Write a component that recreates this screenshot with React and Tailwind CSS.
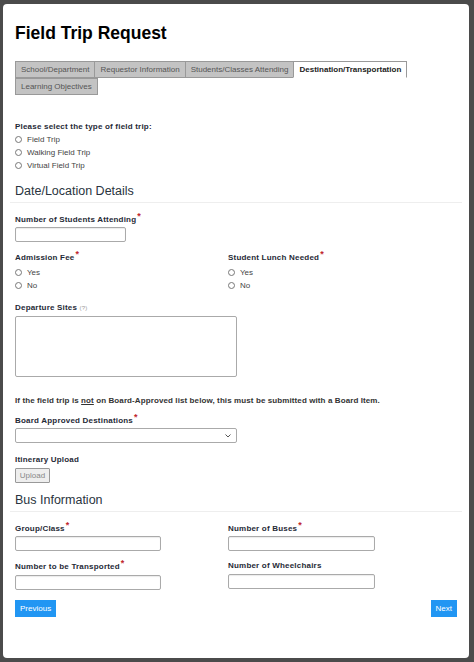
import React from "react";

const F = { fontFamily: '"Liberation Sans", Arial, sans-serif' };

function Req() {
  return <span className="text-[#c0262d] text-[9px] relative -top-[3px] ml-[1px]">*</span>;
}

function Label({ children, req, className = "" }) {
  return (
    <div className={"font-bold text-[8px] text-[#1f2a36] tracking-[0.2px] leading-[10px] " + className}>
      {children}
      {req && <Req />}
    </div>
  );
}

function Radio({ label }) {
  return (
    <div className="flex items-center gap-[5px] h-[13px]">
      <span className="w-[7px] h-[7px] rounded-full border border-[#777] bg-white" />
      <span className="text-[8px] text-[#444]">{label}</span>
    </div>
  );
}

function Input({ w }) {
  return <div className={"h-[15px] border border-[#aaa] rounded-[2px] bg-white shadow-[inset_0_1px_1px_rgba(0,0,0,0.08)] " + w} />;
}

function Tab({ children, active }) {
  return (
    <div
      className={
        "h-[17px] px-[5px] flex items-center text-[8px] border border-[#999] -mr-[1px] " +
        (active ? "bg-white text-[#222] font-bold border-b-white" : "bg-[#c3c3c3] text-[#555]")
      }
    >
      {children}
    </div>
  );
}

export default function App() {
  return (
    <div style={F} className="w-[474px] h-[662px] bg-[#4b4b4b] pt-[4px] pl-[3px] pr-[5px] pb-[4px]">
      <div className="bg-white rounded-[4px] h-full px-[12px] pt-[19px] relative">
        <h1 className="text-[17.5px] font-bold text-black leading-[20px]">Field Trip Request</h1>
        <div className="mt-[18px] w-[400px] flex flex-wrap">
          <Tab>School/Department</Tab>
          <Tab>Requestor Information</Tab>
          <Tab>Students/Classes Attending</Tab>
          <Tab active>Destination/Transportation</Tab>
          <Tab>Learning Objectives</Tab>
        </div>

        <Label className="mt-[27px]">Please select the type of field trip:</Label>
        <div className="mt-[1px]">
          <Radio label="Field Trip" />
          <Radio label="Walking Field Trip" />
          <Radio label="Virtual Field Trip" />
        </div>

        <div className="mt-[12px] text-[12.5px] text-[#2a3440] leading-[15px]">Date/Location Details</div>
        <div className="-mx-[5px] mt-[3px] border-t border-[#eee]" />

        <Label req className="mt-[11px]">Number of Students Attending</Label>
        <div className="mt-[2px]"><Input w="w-[111px]" /></div>

        <div className="mt-[10px] grid grid-cols-[213px_1fr]">
          <div>
            <Label req>Admission Fee</Label>
            <div className="mt-[3px]">
              <Radio label="Yes" />
              <Radio label="No" />
            </div>
          </div>
          <div>
            <Label req>Student Lunch Needed</Label>
            <div className="mt-[3px]">
              <Radio label="Yes" />
              <Radio label="No" />
            </div>
          </div>
        </div>

        <div className="mt-[11px] font-bold text-[8px] text-[#1f2a36] tracking-[0.2px] leading-[10px]">
          Departure Sites <span className="font-normal text-[6px] text-[#999]">(?)</span>
        </div>
        <div className="mt-[3px] w-[222px] h-[61px] border border-[#aaa] rounded-[2px]" />

        <div className="mt-[19px] font-bold text-[8px] text-[#333] tracking-[0.1px] leading-[10px]">
          If the field trip is <span className="underline">not</span> on Board-Approved list below, this must be submitted with a Board Item.
        </div>

        <Label req className="mt-[9px]">Board Approved Destinations</Label>
        <div className="mt-[2px] w-[222px] h-[15px] border border-[#aaa] rounded-[2px] flex items-center justify-end pr-[5px]">
          <svg width="6" height="4" viewBox="0 0 6 4"><path d="M0.5 0.5 L3 3 L5.5 0.5" fill="none" stroke="#555" strokeWidth="1" /></svg>
        </div>

        <Label className="mt-[12px]">Itinerary Upload</Label>
        <div className="mt-[3px] w-[35px] h-[15px] bg-[#eee] border border-[#999] rounded-[1px] text-[8px] text-[#888] flex items-center justify-center">Upload</div>

        <div className="mt-[10px] text-[12.5px] text-[#2a3440] leading-[15px]">Bus Information</div>
        <div className="-mx-[5px] mt-[3px] border-t border-[#eee]" />

        <div className="mt-[11px] grid grid-cols-[213px_1fr]">
          <div>
            <Label req>Group/Class</Label>
            <div className="mt-[2px]"><Input w="w-[146px]" /></div>
          </div>
          <div>
            <Label req>Number of Buses</Label>
            <div className="mt-[2px]"><Input w="w-[147px]" /></div>
          </div>
        </div>
        <div className="mt-[10px] grid grid-cols-[213px_1fr]">
          <div>
            <Label req>Number to be Transported</Label>
            <div className="mt-[3px]"><Input w="w-[146px]" /></div>
          </div>
          <div>
            <Label>Number of Wheelchairs</Label>
            <div className="mt-[3px]"><Input w="w-[147px]" /></div>
          </div>
        </div>

        <div className="mt-[10px] flex justify-between">
          <div className="h-[17px] px-[5px] bg-[#2196f3] text-white text-[8px] flex items-center">Previous</div>
          <div className="h-[17px] px-[5px] bg-[#2196f3] text-white text-[8px] flex items-center">Next</div>
        </div>
      </div>
    </div>
  );
}
